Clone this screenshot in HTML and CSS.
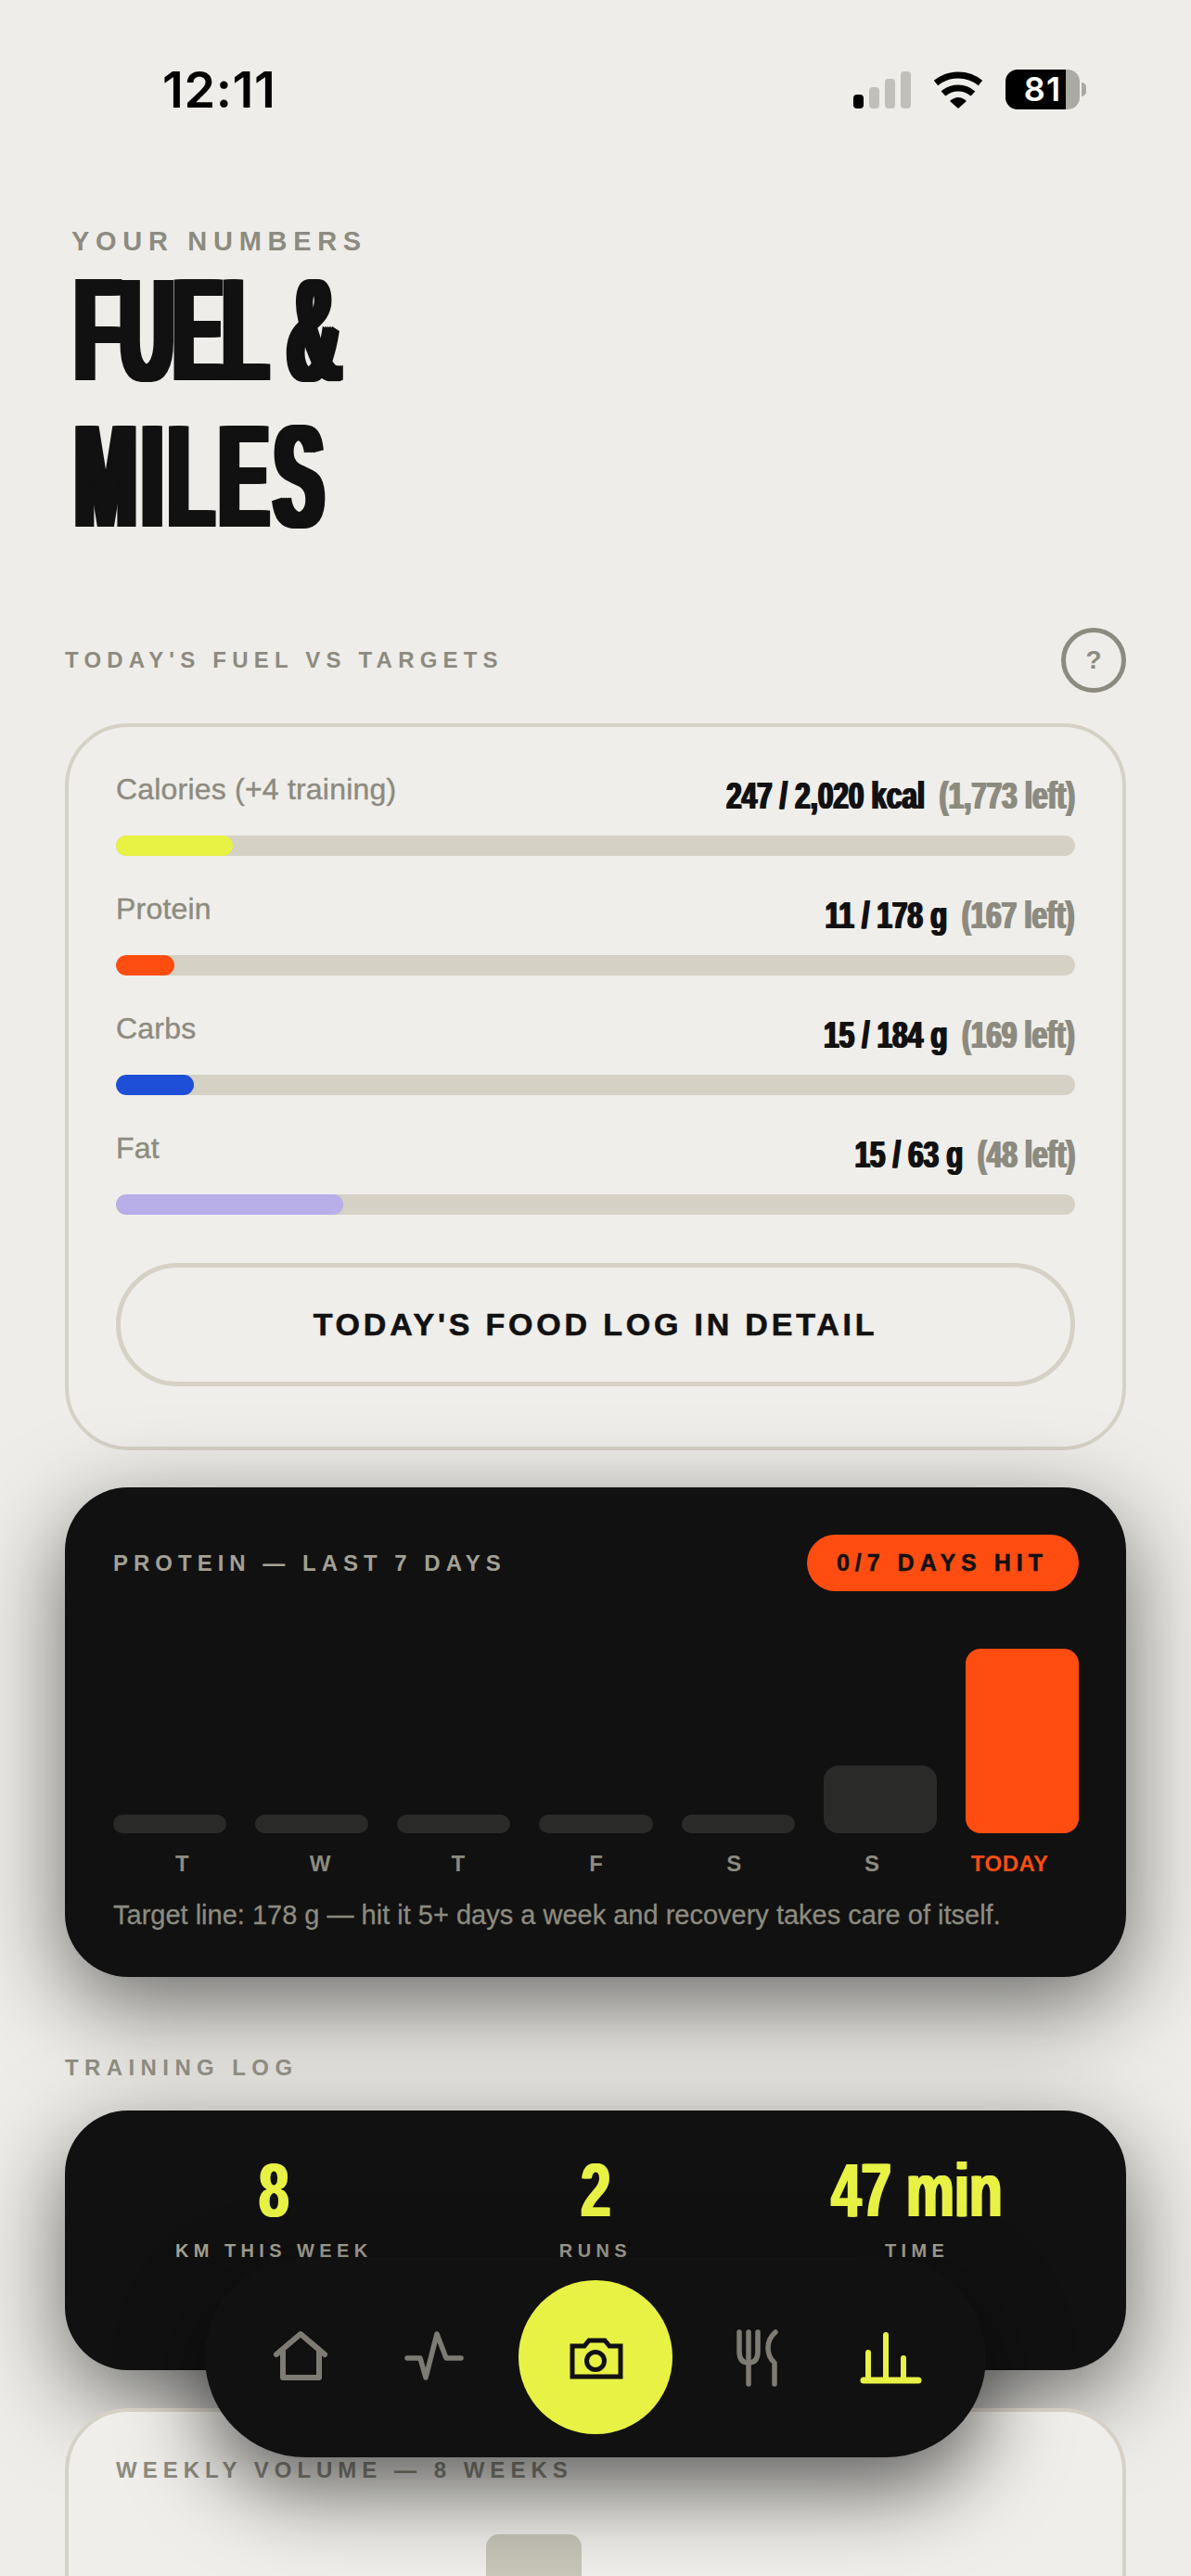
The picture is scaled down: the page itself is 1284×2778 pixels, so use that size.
FILE: index.html
```html
<!DOCTYPE html>
<html lang="en">
<head>
    <meta charset="UTF-8">
    <meta name="viewport" content="width=device-width, initial-scale=1.0">
    <title>Fuel &amp; Miles</title>
    <link rel="stylesheet" href="styles.css">
</head>
<body>
    <div class="status-bar">
        <div class="status-time">12:11</div>
        <div class="status-icons">
            <svg class="signal-icon" width="62" height="40" viewBox="0 0 62 40">
                <rect x="0" y="25" width="11" height="15" rx="4" fill="#000"/>
                <rect x="17" y="17" width="11" height="23" rx="4" fill="#c0bfba"/>
                <rect x="34" y="8" width="11" height="32" rx="4" fill="#c0bfba"/>
                <rect x="51" y="0" width="11" height="40" rx="4" fill="#c0bfba"/>
            </svg>
            <svg class="wifi-icon" width="54" height="40" viewBox="0 0 54 40">
                <path d="M3 12.5 A38 38 0 0 1 51 12.5" fill="none" stroke="#000" stroke-width="7"/>
                <path d="M11 24 A24 24 0 0 1 43 24" fill="none" stroke="#000" stroke-width="7"/>
                <path d="M18 32 Q27 24 36 32 L27 40 Z" fill="#000"/>
            </svg>
            <div class="battery">
                <div class="battery-body">81</div>
                <div class="battery-tip"></div>
            </div>
        </div>
    </div>

    <div class="page">
        <div class="eyebrow">YOUR NUMBERS</div>
        <h1 class="title">
            <span class="title-line">FUEL &amp;</span>
            <span class="title-line title-line-wide">MILES</span>
        </h1>

        <div class="section-head">
            <span class="section-label">TODAY'S FUEL VS TARGETS</span>
            <div class="help-btn">?</div>
        </div>

        <div class="card">
            <div class="macro-row">
                <div class="macro-head">
                    <span class="macro-name">Calories (+4 training)</span>
                    <span class="macro-value">247 / 2,020 kcal <span class="macro-left">(1,773 left)</span></span>
                </div>
                <div class="track"><div class="fill fill-yellow" style="width: 12.2%;"></div></div>
            </div>
            <div class="macro-row">
                <div class="macro-head">
                    <span class="macro-name">Protein</span>
                    <span class="macro-value">11 / 178 g <span class="macro-left">(167 left)</span></span>
                </div>
                <div class="track"><div class="fill fill-orange" style="width: 6.1%;"></div></div>
            </div>
            <div class="macro-row">
                <div class="macro-head">
                    <span class="macro-name">Carbs</span>
                    <span class="macro-value">15 / 184 g <span class="macro-left">(169 left)</span></span>
                </div>
                <div class="track"><div class="fill fill-blue" style="width: 8.1%;"></div></div>
            </div>
            <div class="macro-row">
                <div class="macro-head">
                    <span class="macro-name">Fat</span>
                    <span class="macro-value">15 / 63 g <span class="macro-left">(48 left)</span></span>
                </div>
                <div class="track"><div class="fill fill-purple" style="width: 23.7%;"></div></div>
            </div>
            <div class="log-btn">TODAY'S FOOD LOG IN DETAIL</div>
        </div>

        <div class="dark-card protein-card">
            <div class="protein-head">
                <span class="section-label label-on-dark">PROTEIN — LAST 7 DAYS</span>
                <span class="pill">0/7 DAYS HIT</span>
            </div>
            <div class="day-bars">
                <div class="day-bar" style="height: 20px;"></div>
                <div class="day-bar" style="height: 20px;"></div>
                <div class="day-bar" style="height: 20px;"></div>
                <div class="day-bar" style="height: 20px;"></div>
                <div class="day-bar" style="height: 20px;"></div>
                <div class="day-bar day-bar-tall" style="height: 73px;"></div>
                <div class="day-bar day-bar-today" style="height: 199px;"></div>
            </div>
            <div class="day-labels">
                <span>T</span>
                <span>W</span>
                <span>T</span>
                <span>F</span>
                <span>S</span>
                <span>S</span>
                <span class="day-today">TODAY</span>
            </div>
            <p class="protein-note">Target line: 178 g — hit it 5+ days a week and recovery takes care of itself.</p>
        </div>

        <div class="section-label training-label">TRAINING LOG</div>

        <div class="dark-card stats-card">
            <div class="stat">
                <div class="stat-value">8</div>
                <div class="stat-label">KM THIS WEEK</div>
            </div>
            <div class="stat">
                <div class="stat-value">2</div>
                <div class="stat-label">RUNS</div>
            </div>
            <div class="stat">
                <div class="stat-value">47 min</div>
                <div class="stat-label">TIME</div>
            </div>
        </div>

        <div class="card volume-card">
            <div class="section-label volume-label">WEEKLY VOLUME — 8 WEEKS</div>
            <div class="volume-bars">
                <div class="volume-bar" style="height: 120px;"></div>
                <div class="volume-bar" style="height: 90px;"></div>
                <div class="volume-bar" style="height: 160px;"></div>
                <div class="volume-bar" style="height: 300px;"></div>
                <div class="volume-bar" style="height: 140px;"></div>
                <div class="volume-bar" style="height: 100px;"></div>
                <div class="volume-bar" style="height: 180px;"></div>
                <div class="volume-bar" style="height: 60px;"></div>
            </div>
        </div>
    </div>

    <nav class="tab-bar">
        <div class="tab-item">
            <svg width="64" height="66" viewBox="0 0 64 66" fill="none" stroke="#7d7b73" stroke-width="6" stroke-linecap="round" stroke-linejoin="round">
                <path d="M6 30 L32 8 L58 30"/>
                <path d="M13 27 V55 H52 V27"/>
            </svg>
        </div>
        <div class="tab-item">
            <svg width="64" height="66" viewBox="0 0 64 66" fill="none" stroke="#7d7b73" stroke-width="5.5" stroke-linecap="round" stroke-linejoin="round">
                <path d="M3 34 H17 L23 55 L35 8 L45 34 H61"/>
            </svg>
        </div>
        <div class="camera-btn">
            <svg width="64" height="66" viewBox="0 0 64 66" fill="none" stroke="#111" stroke-width="5">
                <path d="M7 21 H20 L25 15 H42 L47 21 H59 V54 H7 Z"/>
                <circle cx="32" cy="37" r="9.5"/>
            </svg>
        </div>
        <div class="tab-item">
            <svg width="64" height="66" viewBox="0 0 64 66" fill="none" stroke="#7d7b73" stroke-width="5.5" stroke-linecap="round" stroke-linejoin="round">
                <path d="M13 6 V27 Q13 39 23 39 Q33 39 33 27 V6"/>
                <path d="M23 6 V62"/>
                <path d="M52 6 Q44 13 44 23 Q44 33 51 39 V62"/>
            </svg>
        </div>
        <div class="tab-item">
            <svg width="64" height="66" viewBox="0 0 64 66" fill="none" stroke="#e8f244" stroke-width="6" stroke-linecap="round">
                <path d="M8 28 V58"/>
                <path d="M27 9 V58"/>
                <path d="M46 34 V58"/>
                <path d="M3 58 H62" stroke-width="7"/>
            </svg>
        </div>
    </nav>
</body>
</html>
```
FILE: styles.css
```css
* {
    margin: 0;
    padding: 0;
    box-sizing: border-box;
}

body {
    width: 1284px;
    height: 2778px;
    overflow: hidden;
    background-color: #eeede9;
    color: #111;
    font-family: "Liberation Sans", Arial, sans-serif;
}

.status-bar {
    height: 245px;
    padding: 75px 113px 0 175px;
    display: flex;
    justify-content: space-between;
    align-items: flex-start;
}

.status-time {
    font-family: Inter, "Liberation Sans", sans-serif;
    font-size: 54px;
    font-weight: 600;
    line-height: 44px;
    letter-spacing: 0.6px;
    color: #000;
}

.status-icons {
    display: flex;
    align-items: flex-start;
    gap: 24px;
    padding-top: 2px;
}

.battery {
    display: flex;
    align-items: center;
    gap: 2px;
    margin-top: -2px;
}

.battery-body {
    width: 80px;
    height: 43px;
    border-radius: 13px;
    background: linear-gradient(to right, #000 81%, #aaa9a3 81%);
    color: #fff;
    font-family: Inter, "Liberation Sans", sans-serif;
    font-size: 36px;
    font-weight: 600;
    line-height: 43px;
    letter-spacing: 1px;
    text-align: center;
}

.battery-tip {
    width: 5px;
    height: 15px;
    border-radius: 0 8px 8px 0;
    background-color: #aaa9a3;
}

.page {
    padding: 0 70px;
}

.eyebrow {
    padding-left: 7px;
    font-size: 29px;
    font-weight: 700;
    line-height: 30px;
    letter-spacing: 6.7px;
    color: #8d8b80;
}

.title {
    margin-top: 1px;
    padding-left: 11px;
    font-size: 158px;
    font-weight: 700;
    line-height: 158px;
    color: #111;
}

.title-line {
    display: block;
    white-space: nowrap;
    transform: scaleX(0.5);
    transform-origin: left center;
    letter-spacing: 1px;
    text-shadow: 5px 0 #111, -5px 0 #111, 10px 0 #111, -10px 0 #111;
}

.title-line-wide {
    letter-spacing: 13px;
}

.section-head {
    margin-top: 85px;
    height: 70px;
    display: flex;
    justify-content: space-between;
    align-items: center;
}

.section-label {
    font-size: 24px;
    font-weight: 700;
    line-height: 30px;
    letter-spacing: 6.2px;
    color: #8d8b80;
}

.help-btn {
    width: 70px;
    height: 70px;
    border: 5px solid #8d8b80;
    border-radius: 50%;
    font-size: 28px;
    font-weight: 700;
    line-height: 60px;
    text-align: center;
    color: #8d8b80;
}

.card {
    margin-top: 33px;
    padding: 46px 51px 65px 51px;
    background-color: #efeeea;
    border: 4px solid #d6d1c5;
    border-radius: 68px;
}

.macro-row {
    margin-bottom: 36px;
}

.macro-head {
    height: 56px;
    margin-bottom: 15px;
    display: flex;
    justify-content: space-between;
    align-items: flex-start;
}

.macro-name {
    font-size: 32px;
    line-height: 42px;
    letter-spacing: 0.2px;
    color: #8d8b80;
    -webkit-text-stroke: 0.4px #8d8b80;
}

.macro-value {
    display: inline-block;
    white-space: nowrap;
    font-size: 40px;
    font-weight: 700;
    line-height: 56px;
    color: #111;
    transform: scaleX(0.74);
    transform-origin: right center;
    text-shadow: 1.5px 0 currentColor, -1.5px 0 currentColor;
}

.macro-left {
    margin-left: 10px;
    color: #8d8b80;
}

.track {
    height: 22px;
    border-radius: 11px;
    background-color: #d6d1c5;
    overflow: hidden;
}

.fill {
    height: 100%;
    border-radius: 11px;
}

.fill-yellow { background-color: #e8f244; }
.fill-orange { background-color: #ff4d12; }
.fill-blue { background-color: #1d4fd8; }
.fill-purple { background-color: #b8aee8; }

.log-btn {
    margin-top: 52px;
    height: 133px;
    border: 5px solid #d6d1c5;
    border-radius: 67px;
    font-size: 34px;
    font-weight: 700;
    line-height: 123px;
    letter-spacing: 3.8px;
    text-align: center;
    color: #111;
    -webkit-text-stroke: 0.6px #111;
}

.dark-card {
    background-color: #111;
    border-radius: 68px;
    box-shadow: 0 30px 100px rgba(0, 0, 0, 0.56);
}

.protein-card {
    margin-top: 40px;
    padding: 51px 51px 49px 52px;
}

.protein-head {
    display: flex;
    justify-content: space-between;
    align-items: center;
}

.label-on-dark {
    color: #a3a094;
    letter-spacing: 6px;
}

.pill {
    height: 61px;
    padding: 0 33px 0 32px;
    border-radius: 31px;
    background-color: #ff4d12;
    color: #111;
    font-size: 25px;
    font-weight: 700;
    line-height: 61px;
    letter-spacing: 6px;
    -webkit-text-stroke: 0.5px #111;
}

.day-bars {
    height: 261px;
    display: flex;
    align-items: flex-end;
    gap: 31px;
}

.day-bar {
    flex: 1;
    background-color: #2a2a28;
    border-radius: 10px;
}

.day-bar-tall {
    border-radius: 16px;
}

.day-bar-today {
    background-color: #ff4d12;
    border-radius: 16px;
}

.day-labels {
    margin-top: 19px;
    display: flex;
    font-size: 24px;
    font-weight: 700;
    line-height: 28px;
    color: #8d8b80;
}

.day-labels span {
    flex: 1;
    text-align: center;
}

.day-labels .day-today {
    color: #ff4d12;
    letter-spacing: 0.5px;
}

.protein-note {
    margin-top: 23px;
    font-size: 29px;
    line-height: 36px;
    color: #8d8b80;
    white-space: nowrap;
    -webkit-text-stroke: 0.3px #8d8b80;
}

.training-label {
    margin-top: 83px;
    letter-spacing: 6.4px;
}

.volume-label {
    letter-spacing: 6px;
}

.stats-card {
    margin-top: 31px;
    height: 280px;
    padding: 41px 52px 0;
    display: grid;
    grid-template-columns: repeat(3, 1fr);
}

.stat {
    text-align: center;
}

.stat-value {
    font-size: 82px;
    font-weight: 700;
    line-height: 90px;
    color: #e8f244;
    transform: scaleX(0.71);
    text-shadow: 2px 0 #e8f244, -2px 0 #e8f244;
}

.stat-label {
    margin-top: 7px;
    font-size: 20px;
    font-weight: 700;
    line-height: 26px;
    letter-spacing: 5.4px;
    color: #a3a094;
}

.volume-card {
    margin-top: 41px;
    padding-top: 48px;
}

.volume-bars {
    margin-top: 54px;
    height: 300px;
    display: flex;
    align-items: flex-end;
    gap: 30px;
}

.volume-bar {
    flex: 1;
    background-color: #c8c5b9;
    border-radius: 14px 14px 0 0;
}

.tab-bar {
    position: fixed;
    left: 221px;
    top: 2434px;
    width: 842px;
    height: 216px;
    border-radius: 108px;
    background-color: #111;
    box-shadow: 0 36px 90px rgba(0, 0, 0, 0.6);
    display: flex;
    justify-content: center;
    align-items: center;
}

.tab-item {
    width: 144px;
    display: flex;
    justify-content: center;
}

.tab-item svg,
.camera-btn svg {
    display: block;
    overflow: visible;
}

.camera-btn {
    width: 166px;
    height: 166px;
    margin: 0 19px;
    border-radius: 50%;
    background-color: #e8f244;
    display: flex;
    justify-content: center;
    align-items: center;
}
```
